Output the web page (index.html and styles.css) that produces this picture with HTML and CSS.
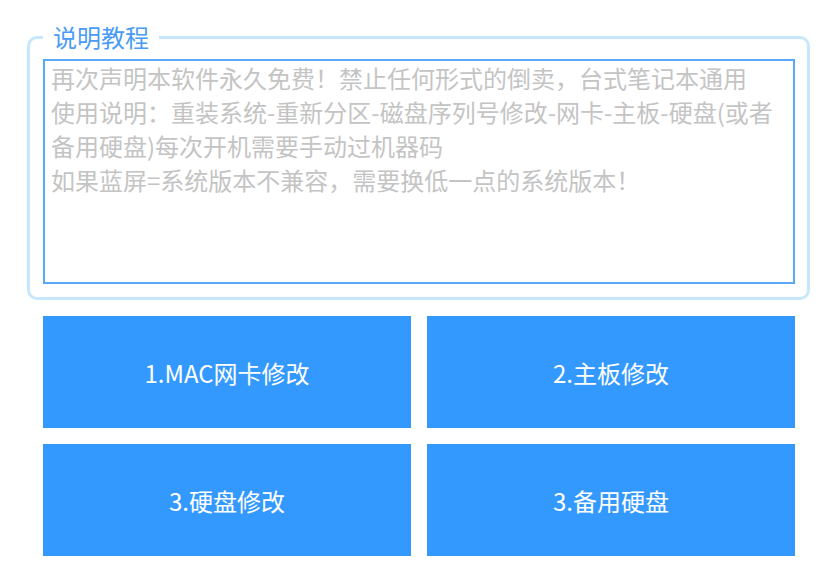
FILE: index.html
```html
<!DOCTYPE html>
<html lang="zh-CN">
<head>
<meta charset="utf-8">
<title>说明教程</title>
<link rel="stylesheet" href="styles.css">
</head>
<body>
<div class="page">
  <fieldset class="group">
    <legend class="group-title">说明教程</legend>
    <div class="notes">再次声明本软件永久免费！禁止任何形式的倒卖，台式笔记本通用
使用说明：重装系统-重新分区-磁盘序列号修改-网卡-主板-硬盘(或者
备用硬盘)每次开机需要手动过机器码
如果蓝屏=系统版本不兼容，需要换低一点的系统版本！</div>
  </fieldset>
  <div class="actions">
    <button class="btn">1.MAC网卡修改</button>
    <button class="btn">2.主板修改</button>
    <button class="btn">3.硬盘修改</button>
    <button class="btn">3.备用硬盘</button>
  </div>
</div>
</body>
</html>
```
FILE: styles.css
```css
html, body {
  margin: 0;
  padding: 0;
  background: #ffffff;
}

body {
  font-family: "Noto Sans CJK SC", "Noto Sans", sans-serif;
  width: 836px;
  height: 564px;
  overflow: hidden;
}

.page {
  padding: 25px 0 0 0;
}

.group {
  margin: 0 0 0 27px;
  width: 783px;
  box-sizing: border-box;
  border: 3px solid #c7e8fc;
  border-radius: 10px;
  padding: 10px 12px 13px 13px;
  min-width: 0;
}

.group-title {
  padding: 0 10px;
  font-size: 24px;
  line-height: 24px;
  color: #4a9bf6;
}

.notes {
  box-sizing: border-box;
  height: 225px;
  border: 2px solid #5aa9f8;
  padding: 0 6px;
  font-size: 24px;
  line-height: 34px;
  color: #c4c4c4;
  white-space: pre-wrap;
  overflow: hidden;
}

.actions {
  display: grid;
  grid-template-columns: 368px 368px;
  grid-auto-rows: 112px;
  gap: 16px;
  margin: 16px 0 0 43px;
}

.btn {
  border: none;
  margin: 0;
  padding: 0;
  background: #3399ff;
  color: #ffffff;
  font-family: "Noto Sans CJK SC", "Noto Sans", sans-serif;
  font-size: 24px;
  cursor: pointer;
}
```
